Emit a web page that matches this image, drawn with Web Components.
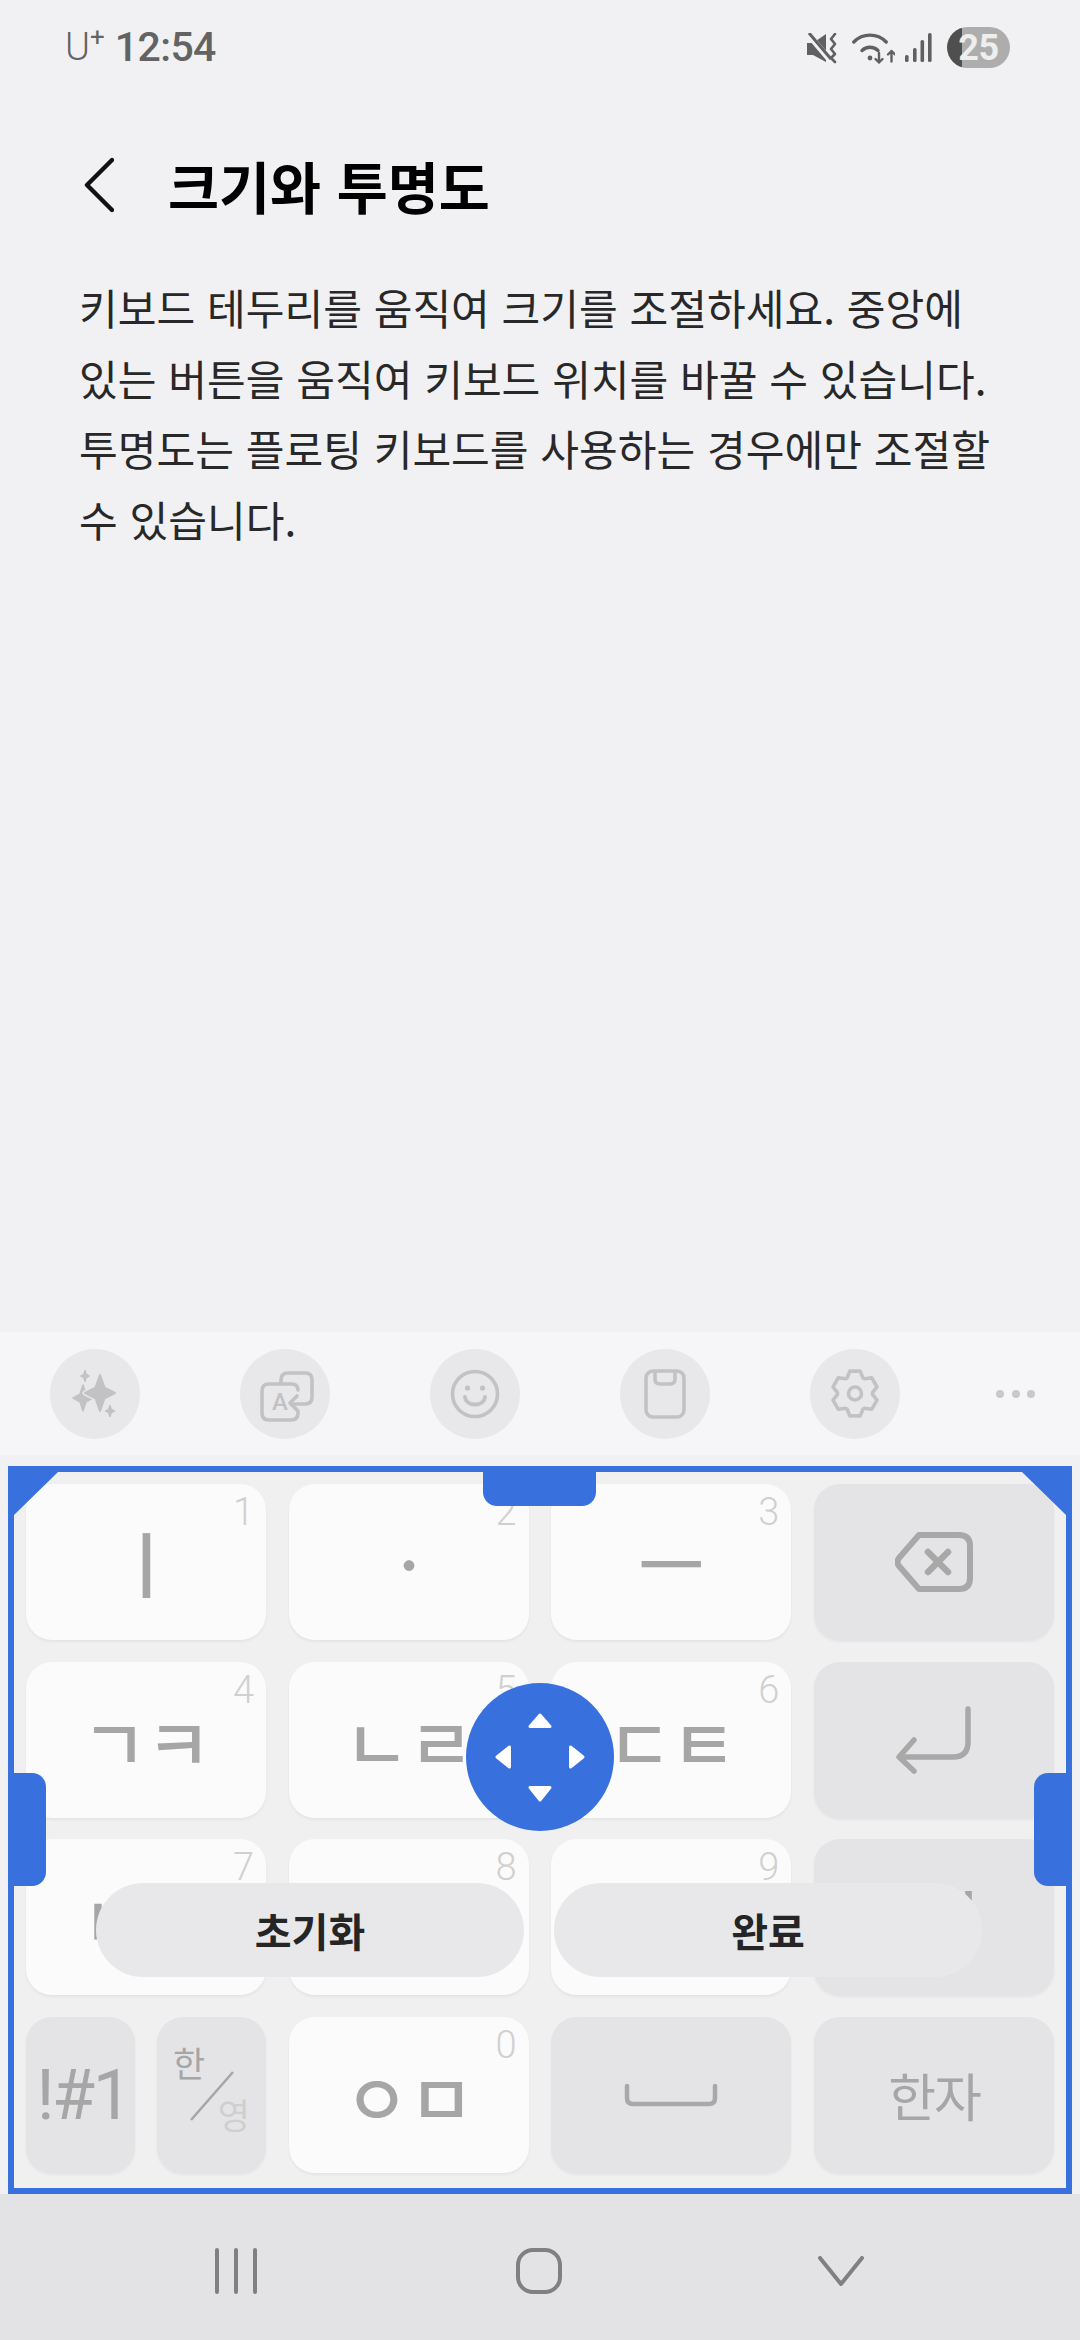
<!DOCTYPE html>
<html lang="ko">
<head>
<meta charset="utf-8">
<title>크기와 투명도</title>
<style>
  html, body { margin: 0; padding: 0; }
  body {
    width: 1080px;
    height: 2340px;
    overflow: hidden;
    display: flex;
    flex-direction: column;
    background: #f1f1f4;
    font-family: "Noto Sans CJK KR", "Noto Sans", sans-serif;
  }
</style>
</head>
<body>
  <ks-status-bar></ks-status-bar>
  <ks-header>크기와 투명도</ks-header>
  <ks-description>
    키보드 테두리를 움직여 크기를 조절하세요. 중앙에<br>
    있는 버튼을 움직여 키보드 위치를 바꿀 수 있습니다.<br>
    투명도는 플로팅 키보드를 사용하는 경우에만 조절할<br>
    수 있습니다.
  </ks-description>
  <ks-toolbar></ks-toolbar>
  <ks-keyboard-frame>
    <ks-key num="1" glyph="tall">ㅣ</ks-key>
    <ks-key num="2" glyph="tall">ㆍ</ks-key>
    <ks-key num="3" glyph="tall">ㅡ</ks-key>
    <ks-key dark>
      <svg width="78" height="60" viewBox="0 0 78 60" fill="none" stroke="#a8a8a8" stroke-width="6" stroke-linejoin="round" stroke-linecap="round">
        <path d="M24 3H64Q75 3 75 14V46Q75 57 64 57H24L4 34Q1 30 4 26Z"/>
        <path d="M33 20L53 40M53 20L33 40" stroke-width="6.5"/>
      </svg>
    </ks-key>

    <ks-key num="4">ㄱㅋ</ks-key>
    <ks-key num="5">ㄴㄹ</ks-key>
    <ks-key num="6">ㄷㅌ</ks-key>
    <ks-key dark>
      <svg width="76" height="68" viewBox="0 0 76 68" fill="none" stroke="#a8a8a8" stroke-width="5.5" stroke-linejoin="round" stroke-linecap="round">
        <path d="M72 3V36Q72 51 57 51H4"/>
        <path d="M18 34L3 51L18 65"/>
      </svg>
    </ks-key>

    <ks-key num="7">ㅂㅍ</ks-key>
    <ks-key num="8">ㅅㅎ</ks-key>
    <ks-key num="9">ㅈㅊ</ks-key>
    <ks-key dark glyph="latin">.,?!</ks-key>

    <ks-key-pair>
      <ks-key dark glyph="symbol">!#1</ks-key>
      <ks-lang-key></ks-lang-key>
    </ks-key-pair>
    <ks-key num="0">ㅇㅁ</ks-key>
    <ks-key dark>
      <svg width="94" height="24" viewBox="0 0 94 24" fill="none" stroke="#a8a8a8" stroke-width="4.5" stroke-linecap="round" stroke-linejoin="round">
        <path d="M3 3V15Q3 21 9 21H85Q91 21 91 15V3"/>
      </svg>
    </ks-key>
    <ks-key dark glyph="hanja">한자</ks-key>
  </ks-keyboard-frame>
  <ks-nav-bar></ks-nav-bar>

<script>
class KsStatusBar extends HTMLElement {
  constructor() {
    super();
    this.attachShadow({ mode: "open" });
    this.shadowRoot.innerHTML = `
      <style>
        :host {
          display: flex;
          justify-content: space-between;
          align-items: flex-start;
          height: 90px;
          padding: 27px 70px 0 65px;
          box-sizing: border-box;
          color: #636363;
          font-family: Roboto, "Liberation Sans", sans-serif;
        }
        .left { display: flex; align-items: flex-start; height: 41px; }
        .carrier { font-size: 38px; font-weight: 300; line-height: 41px; }
        .plus { font-size: 26px; font-weight: 400; line-height: 20px; margin: 0 10px 0 0; }
        .time { font-size: 41px; font-weight: 500; line-height: 41px; letter-spacing: -.6px; }
        .right { display: flex; align-items: flex-start; }
        svg { display: block; }
        .battery {
          width: 63px;
          height: 41px;
          border-radius: 21px;
          overflow: hidden;
          display: flex;
          align-items: center;
          justify-content: center;
          color: #eeeeee;
          font-size: 36px;
          font-weight: 700;
          letter-spacing: -.5px;
          background: linear-gradient(90deg, #4f4f4f 15px, #adadad 15px);
        }
      </style>
      <div class="left">
        <span class="carrier">U</span><span class="plus">+</span><span class="time">12:54</span>
      </div>
      <div class="right">
        <svg style="margin:6px 15px 0 0" width="30" height="31" viewBox="0 0 30 31" fill="#606060">
          <path d="M0 10H6L19 1V29L6 22H0Z"/>
          <path d="M1 1L23 27" stroke="#f1f1f4" stroke-width="6"/>
          <path d="M2 0L24 26" stroke="#606060" stroke-width="3"/>
          <path d="M28 1L24 6L28 11L24 16L28 21L24 25L28 29" fill="none" stroke="#606060" stroke-width="2.6" stroke-linecap="round" stroke-linejoin="round"/>
        </svg>
        <svg style="margin:5px 10px 0 0" width="43" height="32" viewBox="0 0 43 32" fill="none" stroke="#606060" stroke-width="3.4" stroke-linecap="round" stroke-linejoin="round">
          <path d="M1.8 10A22.5 22.5 0 0 1 34.2 10"/>
          <path d="M10 18.5A11.5 11.5 0 0 1 26 18.5"/>
          <circle cx="18" cy="26" r="2.4" fill="#606060" stroke="none"/>
          <path d="M27 21V30.5M23.5 27L27 30.5L30.5 27" stroke-width="2.4"/>
          <path d="M39.5 29.5V19M36 22.5L39.5 19L43 22.5" stroke-width="2.4"/>
        </svg>
        <svg style="margin:6px 15px 0 0" width="27" height="30" viewBox="0 0 27 30" fill="#606060">
          <rect x="0" y="22" width="3.6" height="7" rx="1.6"/>
          <rect x="8" y="15" width="3.6" height="14" rx="1.6"/>
          <rect x="15.5" y="7" width="3.6" height="22" rx="1.6"/>
          <rect x="23" y="0" width="3.6" height="29" rx="1.6"/>
        </svg>
        <div class="battery">25</div>
      </div>
    `;
  }
}

class KsHeader extends HTMLElement {
  constructor() {
    super();
    this.attachShadow({ mode: "open" });
    this.shadowRoot.innerHTML = `
      <style>
        :host {
          display: flex;
          align-items: center;
          height: 76px;
          margin-top: 57px;
          padding-left: 84px;
          color: #000;
        }
        svg { display: block; margin-right: 54px; }
        .title {
          font-size: 55.5px;
          font-weight: 700;
          line-height: 76px;
          white-space: nowrap;
        }
      </style>
      <svg width="30" height="56" viewBox="0 0 30 56" fill="none" stroke="#111" stroke-width="4.4" stroke-linecap="round" stroke-linejoin="round">
        <path d="M28 3L3 28L28 53"/>
      </svg>
      <div class="title"><slot></slot></div>
    `;
  }
}

class KsDescription extends HTMLElement {
  constructor() {
    super();
    this.attachShadow({ mode: "open" });
    this.shadowRoot.innerHTML = `
      <style>
        :host {
          display: block;
          flex: 1;
          padding: 49px 40px 0 79px;
          color: #282828;
          font-size: 42.1px;
          line-height: 70.5px;
          white-space: nowrap;
        }
      </style>
      <slot></slot>
    `;
  }
}

function gearPath(cx, cy, rOut, rIn) {
  let d = "";
  for (let i = 0; i < 6; i++) {
    const a = -90 + i * 60;
    [[-27, rIn], [-13, rOut], [13, rOut], [27, rIn]].forEach(([off, r], j) => {
      const t = (a + off) * Math.PI / 180;
      const x = (cx + r * Math.cos(t)).toFixed(1);
      const y = (cy + r * Math.sin(t)).toFixed(1);
      d += (i === 0 && j === 0 ? "M" : "L") + x + " " + y;
    });
  }
  return d + "Z";
}

class KsToolbar extends HTMLElement {
  constructor() {
    super();
    this.attachShadow({ mode: "open" });
    const star = (x, y, rx, ry) => {
      const w = rx * 0.3;
      const h = ry * 0.3;
      return `M${x} ${y - ry}L${x + w} ${y - h}L${x + rx} ${y}L${x + w} ${y + h}L${x} ${y + ry}L${x - w} ${y + h}L${x - rx} ${y}L${x - w} ${y - h}Z`;
    };
    this.shadowRoot.innerHTML = `
      <style>
        :host {
          display: flex;
          align-items: center;
          height: 123px;
          background: #f6f6f8;
          padding-left: 50px;
          flex: none;
        }
        .round {
          width: 90px;
          height: 90px;
          margin-right: 100px;
          border-radius: 50%;
          background: #e8e8ea;
          flex: none;
        }
        svg { display: block; }
        .dots { display: flex; gap: 7.5px; margin-left: -4px; }
        .dots i { width: 8px; height: 8px; border-radius: 50%; background: #c9c9cb; }
        text { font-family: Roboto, sans-serif; }
      </style>
      <div class="round">
        <svg width="90" height="90" viewBox="0 0 90 90" fill="#c2c2c4" stroke-linejoin="round">
          <path d="${star(33, 49, 10, 13)}" stroke="#c2c2c4" stroke-width="1.5"/>
          <path d="${star(50, 44, 15, 18)}" stroke="#e8e8ea" stroke-width="5"/>
          <path d="${star(50, 44, 15, 18)}" stroke="#c2c2c4" stroke-width="2"/>
          <path d="${star(35, 27, 4.5, 6)}" stroke="#c2c2c4"/>
          <path d="${star(60, 62, 5, 6)}" stroke="#c2c2c4"/>
        </svg>
      </div>
      <div class="round">
        <svg width="90" height="90" viewBox="0 0 90 90" fill="none" stroke="#c2c2c4" stroke-width="3.6" stroke-linecap="round" stroke-linejoin="round">
          <path d="M58 40V41M58 62V64Q58 71 51 71H29Q22 71 22 64V42Q22 35 29 35H52Q57 35 58 40"/>
          <path d="M41 34V31Q41 24 48 24H65Q72 24 72 31V48Q72 55 65 55H51"/>
          <path d="M57 47L50 54L57 61"/>
          <text x="40" y="61" font-size="24" font-weight="500" fill="#c2c2c4" stroke="none" text-anchor="middle">A</text>
        </svg>
      </div>
      <div class="round">
        <svg width="90" height="90" viewBox="0 0 90 90" fill="none" stroke="#c2c2c4" stroke-width="3.6" stroke-linecap="round">
          <circle cx="45" cy="45" r="22.5"/>
          <circle cx="37.5" cy="39" r="2.6" fill="#c2c2c4" stroke="none"/>
          <circle cx="52.5" cy="39" r="2.6" fill="#c2c2c4" stroke="none"/>
          <path d="M35 48C36 58 54 58 55 48" stroke-width="3.8"/>
        </svg>
      </div>
      <div class="round">
        <svg width="90" height="90" viewBox="0 0 90 90" fill="none" stroke="#c2c2c4" stroke-width="3.6" stroke-linejoin="round">
          <rect x="26" y="22" width="38" height="46" rx="7"/>
          <path d="M35 22V30Q35 35 40 35H50Q55 35 55 30V22"/>
        </svg>
      </div>
      <div class="round">
        <svg width="90" height="90" viewBox="0 0 90 90" fill="none" stroke="#c2c2c4" stroke-width="3.6" stroke-linejoin="round">
          <path d="${gearPath(45, 44.5, 23, 17.5)}"/>
          <circle cx="45" cy="44.5" r="6.5"/>
        </svg>
      </div>
      <div class="dots"><i></i><i></i><i></i></div>
    `;
  }
}

class KsKey extends HTMLElement {
  constructor() {
    super();
    this.attachShadow({ mode: "open" });
    this.shadowRoot.innerHTML = `
      <style>
        :host {
          position: relative;
          display: flex;
          align-items: center;
          justify-content: center;
          min-width: 0;
          border-radius: 26px;
          background: #fbfbfb;
          box-shadow: 0 2px 3px rgba(0, 0, 0, .05);
          color: #a6a6a6;
          font-size: 71px;
          font-weight: 500;
          letter-spacing: -1px;
          white-space: nowrap;
          box-sizing: border-box;
        }
        :host([dark]) { background: #e4e4e6; font-weight: 400; }
        :host([glyph="tall"]) { font-size: 72px; letter-spacing: 0; padding-bottom: 4px; }
        :host([glyph="hanja"]) { font-size: 52px; letter-spacing: -2px; }
        :host([glyph="symbol"]) {
          font-family: Roboto, sans-serif;
          font-size: 70px;
          letter-spacing: -2.5px;
          padding-left: 5px;
        }
        :host([glyph="latin"]) {
          font-family: Roboto, sans-serif;
          font-size: 70px;
          letter-spacing: 2px;
        }
        .num {
          position: absolute;
          top: 4px;
          right: 12px;
          color: #d0d0d0;
          font: 300 38px/48px Roboto, sans-serif;
          letter-spacing: 0;
        }
        .num:empty { display: none; }
      </style>
      <span class="num">${this.getAttribute("num") || ""}</span>
      <slot></slot>
    `;
  }
}

class KsKeyPair extends HTMLElement {
  constructor() {
    super();
    this.attachShadow({ mode: "open" });
    this.shadowRoot.innerHTML = `
      <style>
        :host { display: grid; grid-template-columns: 1fr 1fr; gap: 22px; min-width: 0; }
      </style>
      <slot></slot>
    `;
  }
}

class KsLangKey extends HTMLElement {
  constructor() {
    super();
    this.attachShadow({ mode: "open" });
    this.shadowRoot.innerHTML = `
      <style>
        :host {
          position: relative;
          display: grid;
          grid-template-rows: auto auto;
          align-content: start;
          height: 100%;
          padding: 23px 16px 0;
          box-sizing: border-box;
          border-radius: 26px;
          background: #e4e4e6;
          box-shadow: 0 2px 3px rgba(0, 0, 0, .05);
          font-size: 35px;
          line-height: 44px;
        }
        .han { color: #a6a6a6; justify-self: start; }
        .eng { color: #cfcfcf; justify-self: end; margin-top: 8px; }
        svg { position: absolute; left: 32px; top: 53px; }
      </style>
      <span class="han">한</span>
      <span class="eng">영</span>
      <svg width="46" height="52" viewBox="0 0 46 52"><path d="M2 50L44 2" stroke="#a6a6a6" stroke-width="2.6"/></svg>
    `;
  }
}

class KsKeyboardFrame extends HTMLElement {
  constructor() {
    super();
    this.attachShadow({ mode: "open" });
    this.shadowRoot.innerHTML = `
      <style>
        :host {
          position: relative;
          display: block;
          height: 728px;
          flex: none;
          box-sizing: border-box;
          margin: 11px 8px 0;
          border: 6px solid #3870de;
          background: #f0f0f1;
          padding: 12px 12px 15px;
        }
        .grid {
          display: grid;
          height: 100%;
          grid-template-columns: repeat(4, 1fr);
          grid-template-rows: repeat(4, 1fr);
          column-gap: 22.67px;
          row-gap: 21.67px;
        }
        .corner { position: absolute; top: 0; width: 44px; height: 43px; background: #3870de; }
        .corner.tl { left: 0; clip-path: polygon(0 0, 100% 0, 0 100%); }
        .corner.tr { right: 0; clip-path: polygon(0 0, 100% 0, 100% 100%); }
        .handle { position: absolute; background: #3870de; }
        .top { top: 0; left: 469px; width: 113px; height: 34px; border-radius: 0 0 14px 14px; }
        .side { top: 301px; width: 32px; height: 113px; }
        .side.left { left: 0; border-radius: 0 14px 14px 0; }
        .side.right { right: 0; border-radius: 14px 0 0 14px; }
        .move {
          position: absolute;
          left: 452px;
          top: 211px;
          width: 148px;
          height: 148px;
          border-radius: 50%;
          background: #3870de;
        }
        .move svg { display: block; }
        .actions {
          position: absolute;
          left: 82px;
          top: 411px;
          display: flex;
          gap: 30px;
        }
        .btn {
          width: 428px;
          height: 94px;
          border-radius: 47px;
          background: #e8e8ea;
          display: flex;
          align-items: center;
          justify-content: center;
          color: #252525;
          font-size: 40px;
          font-weight: 700;
        }
      </style>
      <div class="grid"><slot></slot></div>
      <div class="corner tl"></div>
      <div class="corner tr"></div>
      <div class="handle top"></div>
      <div class="handle side left"></div>
      <div class="handle side right"></div>
      <div class="actions">
        <div class="btn">초기화</div>
        <div class="btn">완료</div>
      </div>
      <div class="move">
        <svg width="148" height="148" viewBox="0 0 148 148" fill="#fff" stroke="#fff" stroke-width="3" stroke-linejoin="round">
          <path d="M64 43.5H84L74 32Z"/>
          <path d="M64 104.5H84L74 117Z"/>
          <path d="M43.5 64V84L31 74Z"/>
          <path d="M104.5 64V84L117 74Z"/>
        </svg>
      </div>
    `;
  }
}

class KsNavBar extends HTMLElement {
  constructor() {
    super();
    this.attachShadow({ mode: "open" });
    this.shadowRoot.innerHTML = `
      <style>
        :host {
          display: flex;
          flex: none;
          height: 146px;
          align-items: center;
          padding: 8px 0 0 85px;
          box-sizing: border-box;
          background: #e3e3e5;
        }
        .cell { width: 302.5px; display: flex; justify-content: center; }
        svg { display: block; }
      </style>
      <div class="cell">
        <svg width="44" height="46" viewBox="0 0 44 46" stroke="#808080" stroke-width="4" stroke-linecap="round">
          <path d="M3 2V44M22 2V44M41 2V44"/>
        </svg>
      </div>
      <div class="cell">
        <svg width="46" height="46" viewBox="0 0 46 46" fill="none" stroke="#808080" stroke-width="4">
          <rect x="2" y="2" width="42" height="42" rx="15"/>
        </svg>
      </div>
      <div class="cell">
        <svg width="46" height="30" viewBox="0 0 46 30" fill="none" stroke="#808080" stroke-width="4" stroke-linecap="round" stroke-linejoin="round">
          <path d="M2 2L23 28L44 2"/>
        </svg>
      </div>
    `;
  }
}

customElements.define("ks-status-bar", KsStatusBar);
customElements.define("ks-header", KsHeader);
customElements.define("ks-description", KsDescription);
customElements.define("ks-toolbar", KsToolbar);
customElements.define("ks-key", KsKey);
customElements.define("ks-key-pair", KsKeyPair);
customElements.define("ks-lang-key", KsLangKey);
customElements.define("ks-keyboard-frame", KsKeyboardFrame);
customElements.define("ks-nav-bar", KsNavBar);
</script>
</body>
</html>
